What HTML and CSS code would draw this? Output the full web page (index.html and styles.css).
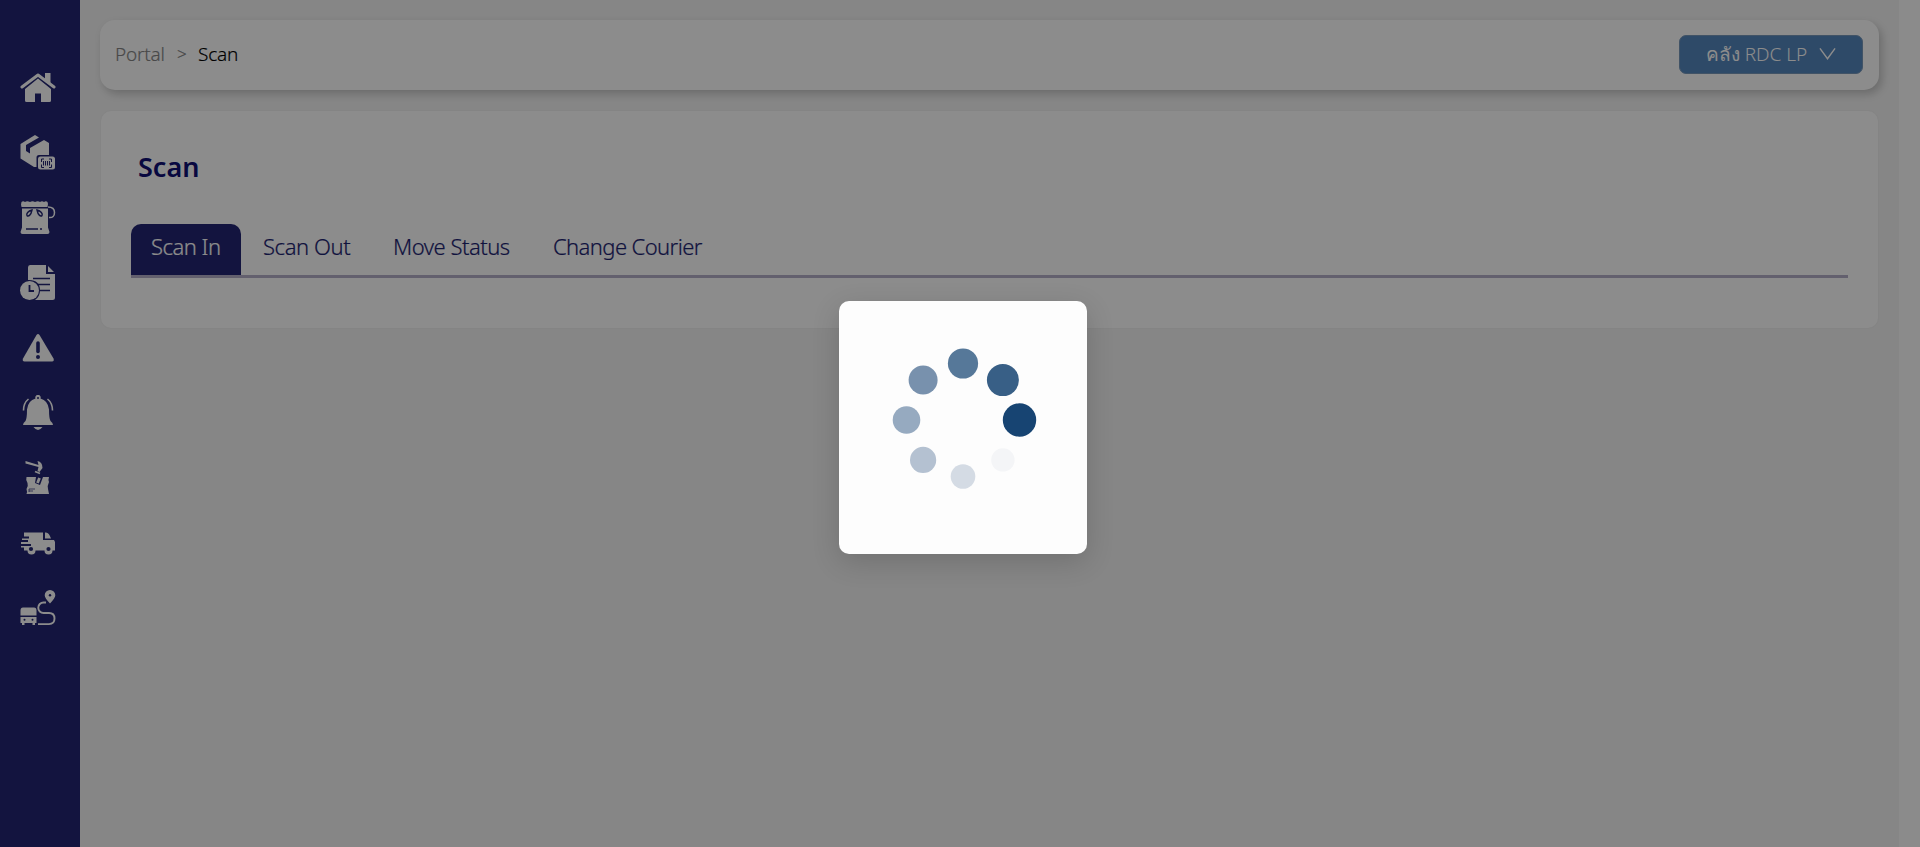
FILE: index.html
```html
<!DOCTYPE html>
<html lang="th">
<head>
<meta charset="utf-8">
<title>Scan</title>
<link rel="stylesheet" href="styles.css">
</head>
<body>
<div class="app">
  <nav class="sidebar">
    <svg class="icon" viewBox="0 0 36 36"><path d="M2 17 18 5l16 12" fill="none" stroke="#fff" stroke-width="3" stroke-linecap="round" stroke-linejoin="round"/><path d="M25 3h5.500v11L25 9.500zM18 8.500 31 19v11.500q0 1.500-1.500 1.500H21v-8.500h-6V32H6.500Q5 32 5 30.500V19z"/></svg>
    <svg class="icon" viewBox="0 0 36 36"><path d="M15 0 19 2.500 6 10v6l4 2.500V13L24 5l5 3v12H19q-2.500 0-2.500 2.500v9.500L14 32 .500 23.500V9z"/><rect x="18" y="21.500" width="17" height="13" rx="2.500"/><path d="M21.500 27v-3H24M29 24h2.500v3M21.500 29.500v3H24M29 32.500h2.500v-3M23.500 26v4.500M25.500 26v4.500M27.500 26v4.500M29.500 26v4.500" fill="none" stroke="#232673" stroke-width="1"/></svg>
    <svg class="icon" viewBox="0 0 36 36"><path d="M1.500 2Q3 .500 5 2q2-1.500 5 0 2.500-1.500 5 0 3-1.500 5 0 2-1.500 4 0 2-1.500 3.500 0L28 4l-.5 3h-26L1 4.500zM2 8.500h26v19l1.500 4.500q0 2-2 2H2.500q-2 0-2-2L2 27.500z"/><path d="M28 7q6.500 0 6.500 5.500T29 17.500" fill="none" stroke="#fff" stroke-width="1.500"/><path d="M12 10c-4 1-6 4-5 5.500s4 0 5-5.500zM17 10c4 1 6 4 5 5.500s-4 0-5-5.500z" fill="none" stroke="#232673" stroke-width="1.400"/><path d="M6 29h12M20 29h2" stroke="#232673" stroke-width="1.400"/></svg>
    <svg class="icon" viewBox="0 0 36 36"><path d="M10 0h16v9h9v23.500q0 2.500-2.500 2.500H15q5-3.500 5-9.500 0-11-12-10.500V2.500Q8 0 10 0zM28 1l6 6h-6z"/><path d="M13 13.500h17M18 19.500h12M20 25.500h10" stroke="#232673" stroke-width="1.700"/><circle cx="9.500" cy="25.500" r="9.500"/><path d="M9.500 20v6H14" fill="none" stroke="#232673" stroke-width="1.800"/></svg>
    <svg class="icon" viewBox="0 0 36 36"><path d="M16.500 5q1.500-2 3 0L33.500 28.500q1 3-1.500 3H4.500q-2.500 0-1.500-3z"/><path d="M18 13v8.500" stroke="#232673" stroke-width="3.600" stroke-linecap="round"/><circle cx="18" cy="27" r="2" fill="#232673"/></svg>
    <svg class="icon" viewBox="0 0 36 36"><path d="M15.500 3.500a2.700 2.700 0 1 1 5 0q7.500 2 8.500 11 0 9 1.500 11.500 2.500 2 2.500 4H3q0-2 2.500-4Q7 23.500 7 14.500q1-9 8.500-11zM13.500 32h9q-4.500 6-9 0z"/><circle cx="18" cy="3" r="1" fill="#232673"/><path d="M8.500 4Q3.500 8 3.500 15.500M27.500 4q5 4 5 11.500" fill="none" stroke="#fff" stroke-width="1.600"/></svg>
    <svg class="icon" viewBox="0 0 36 36"><path d="m5.500 1 13 4-1-4q5 1 5 7l-3 4-2-1 1-4-13-3.500zM6.500 17h9.500l-1 6 5 2 3-8h6q-1 3 0 5-2 4-1 7l1 5H6.500q1-2 0-5 2-3 1-6-2-3-1-6z"/><path d="m15 11.500 5 2" stroke="#fff" stroke-width="1.800"/><path d="m19.500 18-2 5" stroke="#fff" stroke-width="2.800"/><path d="M9 32v-3h6M9 31h4" fill="none" stroke="#232673" stroke-width=".7"/></svg>
    <svg class="icon" viewBox="0 0 36 36"><path d="M4 7.500h19v7.500h11l1 2v8.500h-2.500a4 4 0 0 1-8 0h-9a4 4 0 0 1-8 0H4v-3H1v-1.500h10v-2H1V17h7v-2H2v-1.500h7v-2H4zM25 7.500h1q3 0 5 6h-6z"/><circle cx="11" cy="24" r="2.100" fill="#232673"/><circle cx="28.500" cy="24" r="2.100" fill="#232673"/></svg>
    <svg class="icon" viewBox="0 0 36 36"><path d="M3 17.500h11q2.500 0 2.500 3v5H.500v-5q0-3 2.500-3zM.500 27h16v6H15v2h-2.500v-2h-8v2H2v-2H.500zM30 0a5.300 5.300 0 0 1 5.300 5.300Q35.300 8 30 13.500 24.700 8 24.700 5.300A5.300 5.300 0 0 1 30 0z"/><circle cx="30" cy="5.300" r="1.200" fill="#232673"/><circle cx="4.500" cy="29.800" r="1" fill="#232673"/><circle cx="12.500" cy="29.800" r="1" fill="#232673"/><path d="M26 12.500h-2.500a5.200 5.200 0 0 0 0 10.500H29q5.500 0 5.500 5.500T29 34.100H18" fill="none" stroke="#fff" stroke-width="1.900"/></svg>
  </nav>
  <main class="main">
    <header class="topbar">
      <div class="crumbs"><span class="crumb-root">Portal</span><span class="crumb-sep">&gt;</span><span>Scan</span></div>
      <button class="branch"><span>คลัง RDC LP</span><svg class="chevron" viewBox="0 0 18 14"><path d="M1 1l8 11 8-11"/></svg></button>
    </header>
    <section class="card">
      <h1 class="title">Scan</h1>
      <div class="tabs">
        <div class="tab active"><span class="t1">Scan In</span></div>
        <div class="tab"><span class="t2">Scan Out</span></div>
        <div class="tab"><span class="t3">Move Status</span></div>
        <div class="tab"><span class="t4">Change Courier</span></div>
      </div>
    </section>
  </main>
  <div class="gutter"></div>
</div>
<div class="overlay">
  <div class="loader">
    <svg class="spinner" viewBox="-75 -75 150 150">
      <circle cx="56.500" cy="0" r="16.700" fill="#174472"/>
      <circle cx="39.900" cy="-39.900" r="16" fill="#385f86"/>
      <circle cx="0" cy="-56.500" r="15.100" fill="#567899"/>
      <circle cx="-39.900" cy="-39.900" r="14.500" fill="#7891ad"/>
      <circle cx="-56.500" cy="0" r="13.800" fill="#96aac0"/>
      <circle cx="-39.900" cy="39.900" r="13.100" fill="#b4c1d1"/>
      <circle cx="0" cy="56.500" r="12.300" fill="#d4dbe4"/>
      <circle cx="39.900" cy="39.900" r="11.700" fill="#f4f5f7"/>
    </svg>
  </div>
</div>
</body>
</html>
```
FILE: styles.css
```css
* { box-sizing: border-box; }
body { margin: 0; overflow: hidden; font-family: "Noto Sans", "Open Sans", sans-serif; }
.app { display: flex; height: 847px; background: #f4f4f4; }
.sidebar { width: 80px; background: #232673; padding: 70px 0 0 19.500px; display: flex; flex-direction: column; gap: 29px; }
.icon { width: 36px; height: 36px; flex: none; fill: #fff; }
.main { flex: 1; padding: 20px 20px 0; }
.gutter { width: 21px; background: #fdfdfd; }
.topbar { height: 70px; background: #fff; border-radius: 15px; box-shadow: 3px 4px 8px rgba(0, 0, 0, .2); display: flex; align-items: center; justify-content: space-between; padding: 0 16px 0 15px; }
.crumbs { display: flex; font-size: 19px; font-weight: 300; line-height: 26px; color: #000; letter-spacing: -.2px; padding-bottom: 2px; -webkit-text-stroke: .15px; }
.crumb-root { width: 62px; color: #858585; }
.crumb-sep { width: 21px; font-size: 17px; color: #858585; }
.branch { width: 184px; height: 39px; margin-bottom: 1px; background: #5587bd; border: 1px solid #7798bb; border-radius: 7px; color: #fff; font: 300 19px/28px "Noto Sans", "Open Sans", sans-serif; letter-spacing: -.05px; display: flex; justify-content: center; align-items: center; gap: 12px; padding: 0 0 2px; white-space: nowrap; }
.chevron { width: 17px; height: 14px; fill: none; stroke: #fff; stroke-width: 1.500; }
.card { height: 217px; margin: 21px 1px 0; background: #fff; border-radius: 10px; padding: 37px 30px 0; box-shadow: 0 0 2px rgba(0, 0, 0, .06); }
.title { margin: 0 0 38px 7px; font-size: 27px; line-height: 38px; font-weight: 600; letter-spacing: 0; color: #0f0f75; }
.tabs { display: flex; border-bottom: 3px solid #b4b0c8; height: 54px; gap: 2px; }
.tab { height: 51px; padding: 0 20px; font-size: 22px; font-weight: 300; line-height: 44px; color: #1d2472; white-space: nowrap; -webkit-text-stroke: .2px; }
.tab span { display: block; }
.active { background: #232673; color: #fff; border-radius: 10px 10px 0 0; }
.t1 { width: 70px; letter-spacing: -.5px; }
.t2 { width: 88px; letter-spacing: -.4px; }
.t3 { width: 118px; letter-spacing: -.5px; }
.t4 { width: 150px; letter-spacing: -.6px; }
.overlay { position: absolute; inset: 0; background: rgba(0, 0, 0, .45); display: flex; justify-content: center; align-items: center; padding: 8px 0 0 6px; }
.loader { width: 248px; height: 253px; background: #fdfdfd; border-radius: 10px; box-shadow: 0 8px 28px rgba(0, 0, 0, .16); padding: 43.500px 0 0 49px; }
.spinner { width: 150px; height: 150px; display: block; }
```
